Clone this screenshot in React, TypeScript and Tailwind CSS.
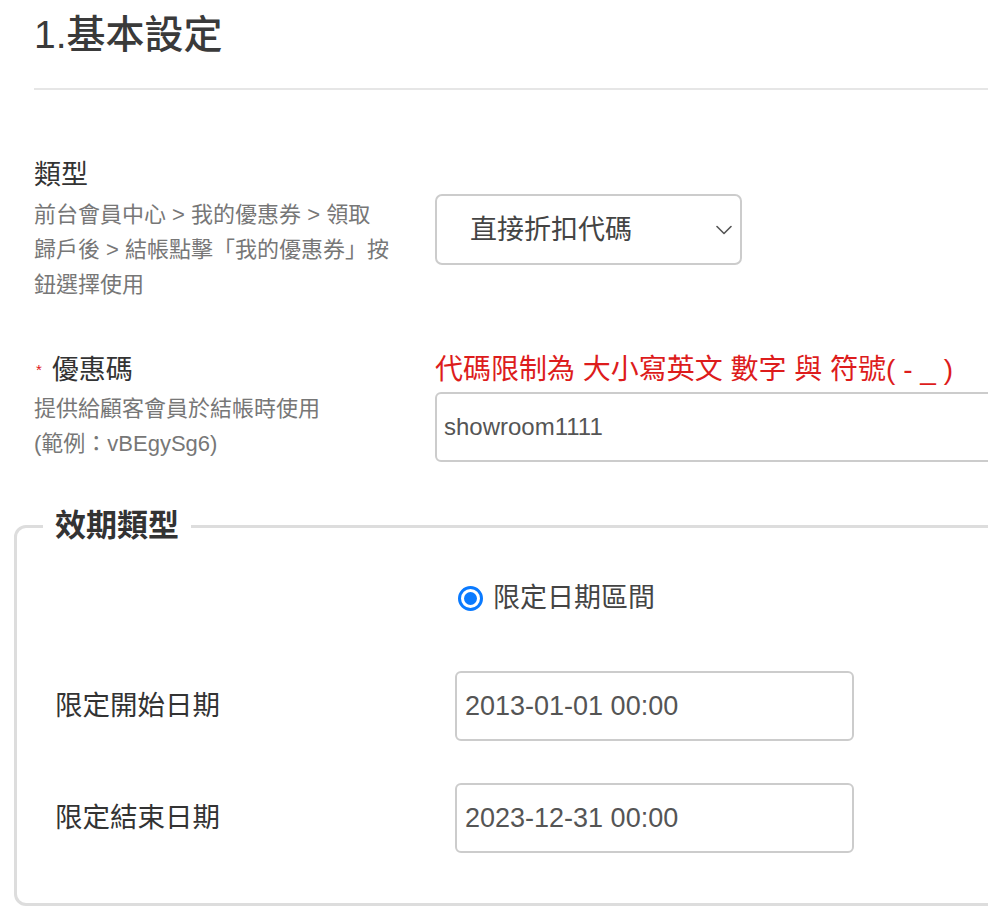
import React from "react";

function Chevron() {
  return (
    <svg width="16" height="10" viewBox="0 0 16 10" fill="none">
      <path d="M1 1.5 L8 8.5 L15 1.5" stroke="#555" strokeWidth="1.6" strokeLinecap="round" strokeLinejoin="round" />
    </svg>
  );
}

function Radio() {
  return (
    <span className="flex items-center justify-center w-[25px] h-[25px] rounded-full border-[3px] border-[#0a7aff] bg-white">
      <span className="w-[13px] h-[13px] rounded-full bg-[#0a7aff]" />
    </span>
  );
}

export default function App() {
  return (
    <div className="w-[988px] h-[922px] overflow-hidden bg-white font-['Liberation_Sans','Noto_Sans_CJK_TC',sans-serif]">
      <div className="w-[1100px] pl-[34px]">
        <h1 className="mt-[12px] text-[39px] leading-[46px] font-medium text-[#3a3a3a]">1.基本設定</h1>
        <div className="mt-[30px] h-[2px] bg-[#e6e6e6]" />

        {/* 類型 */}
        <div className="flex mt-[67px]">
          <div className="w-[358px] mr-[43px]">
            <div className="text-[27px] leading-[36px] text-[#333]">類型</div>
            <p className="mt-[4px] text-[22px] leading-[35px] text-[#777]">
              前台會員中心 &gt; 我的優惠券 &gt; 領取
              <br />
              歸戶後 &gt; 結帳點擊「我的優惠券」按
              <br />
              鈕選擇使用
            </p>
          </div>
          <div className="pt-[37px]">
            <div className="flex items-center justify-between w-[307px] h-[71px] pl-[33px] pr-[8px] border-2 border-[#ccc] rounded-[7px]">
              <span className="text-[27px] leading-[36px] text-[#444]">直接折扣代碼</span>
              <Chevron />
            </div>
          </div>
        </div>

        {/* 優惠碼 */}
        <div className="flex mt-[50px]">
          <div className="w-[358px] mr-[43px]">
            <div className="flex items-center text-[27px] leading-[36px] text-[#333]">
              <span className="ml-[2px] mr-[10px] text-[15px] text-[#e01a1a]">*</span>
              優惠碼
            </div>
            <p className="mt-[3px] text-[22px] leading-[35px] text-[#777]">
              提供給顧客會員於結帳時使用
              <br />
              (範例：vBEgySg6)
            </p>
          </div>
          <div className="flex-1">
            <div className="text-[28px] leading-[36px] text-[#dd1c1c]">代碼限制為 大小寫英文 數字 與 符號( - _ )</div>
            <div className="flex items-center mt-[4px] h-[70px] pl-[7px] border-2 border-[#ccc] rounded-[6px]">
              <span className="text-[24px] text-[#555]">showroom1111</span>
            </div>
          </div>
        </div>

        {/* 效期類型 */}
        <fieldset className="mt-[45px] -ml-[20px] w-[1040px] px-[26px] pb-[50px] border-[3px] border-[#ddd] rounded-[12px]">
          <legend className="px-[12px] text-[31px] leading-[38px] font-semibold text-[#333]">效期類型</legend>
          <div className="pl-[12px]">
            <div className="flex items-center mt-[35px] h-[36px]">
              <div className="w-[403px]" />
              <Radio />
              <span className="ml-[10px] text-[27px] leading-[36px] text-[#444]">限定日期區間</span>
            </div>

            <div className="flex items-center mt-[55px]">
              <div className="w-[400px] text-[27.5px] leading-[36px] text-[#333]">限定開始日期</div>
              <div className="flex items-center w-[399px] h-[70px] pl-[8px] border-2 border-[#ccc] rounded-[6px]">
                <span className="text-[27px] text-[#555]">2013-01-01 00:00</span>
              </div>
            </div>

            <div className="flex items-center mt-[42px]">
              <div className="w-[400px] text-[27.5px] leading-[36px] text-[#333]">限定結束日期</div>
              <div className="flex items-center w-[399px] h-[70px] pl-[8px] border-2 border-[#ccc] rounded-[6px]">
                <span className="text-[27px] text-[#555]">2023-12-31 00:00</span>
              </div>
            </div>
          </div>
        </fieldset>
      </div>
    </div>
  );
}
